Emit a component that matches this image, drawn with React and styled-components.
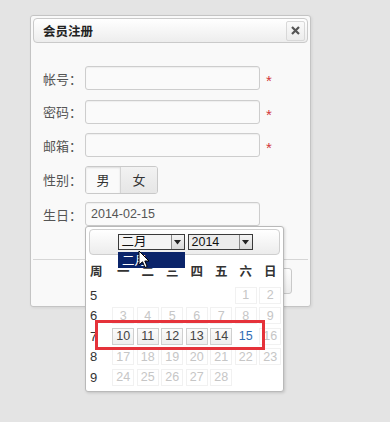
import React from "react";
import styled, { createGlobalStyle } from "styled-components";

const GlobalStyle = createGlobalStyle`
  html, body {
    margin: 0;
    padding: 0;
    background: #e4e4e4;
    font-family: "Liberation Sans", "Noto Sans CJK SC", sans-serif;
  }
`;

const Page = styled.div`
  width: 390px;
  height: 422px;
  padding: 15px 0 0 30px;
  box-sizing: border-box;
  overflow: hidden;
`;

const Dialog = styled.div`
  position: relative;
  width: 281px;
  box-sizing: border-box;
  border: 1px solid #c4c4c4;
  border-radius: 3px;
  background: #f9f9f9;
  padding: 2px 2px 0;
  box-shadow: 1px 1px 3px rgba(0, 0, 0, 0.08);
`;

const Header = styled.div`
  height: 25px;
  box-sizing: border-box;
  display: flex;
  align-items: center;
  justify-content: space-between;
  padding: 0 2px 0 9px;
  border: 1px solid #cacaca;
  border-radius: 4px;
  background: linear-gradient(#ffffff, #ededed);
`;

const Title = styled.span`
  font-family: "Noto Sans CJK SC", sans-serif;
  font-weight: 700;
  font-size: 12.5px;
  color: #222;
`;

const CloseButton = styled.div`
  width: 19px;
  height: 20px;
  box-sizing: border-box;
  border: 1px solid #d8d8d8;
  border-radius: 2px;
  background: linear-gradient(#fafafa, #ececec);
  display: flex;
  align-items: center;
  justify-content: center;
  color: #555;
`;

const Body = styled.div`
  display: flex;
  flex-direction: column;
  gap: 9.5px;
  padding: 23px 0 33px 10px;
`;

const Row = styled.div`
  display: flex;
  align-items: center;
  height: ${(p) => p.h || 24}px;
`;

const Label = styled.span`
  width: 42px;
  font-family: "Noto Sans CJK SC", sans-serif;
  font-size: 13px;
  color: #555;
`;

const Input = styled.div`
  width: 175px;
  height: 24px;
  box-sizing: border-box;
  border: 1px solid #cdcdcd;
  border-radius: 3px;
  background: #fafafa;
  box-shadow: inset 0 1px 1px rgba(0, 0, 0, 0.05);
  padding-left: 5px;
  display: flex;
  align-items: center;
  font-family: "Liberation Sans", sans-serif;
  font-size: 12.5px;
  color: #555;
`;

const Required = styled.span`
  margin-left: 6px;
  color: #d2363a;
  font-size: 15px;
  padding-top: 5px;
`;

const Toggle = styled.div`
  display: flex;
  height: 26px;
  border: 1px solid #c9c9c9;
  border-radius: 3px;
  overflow: hidden;
`;

const ToggleItem = styled.div`
  width: ${(p) => p.w}px;
  display: flex;
  align-items: center;
  justify-content: center;
  font-family: "Noto Sans CJK SC", sans-serif;
  font-size: 13px;
  color: #333;
  background: ${(p) => (p.active ? "#fafafa" : "linear-gradient(#f2f2f2, #e6e6e6)")};
  box-shadow: ${(p) => (p.active ? "inset 0 1px 2px rgba(0,0,0,0.12)" : "none")};
  & + & {
    border-left: 1px solid #d4d4d4;
  }
`;

const Footer = styled.div`
  border-top: 1px solid #d6d6d6;
  height: 47px;
  display: flex;
  justify-content: flex-end;
  align-items: flex-start;
  padding: 8px 16px 0 0;
  box-sizing: border-box;
`;

const FooterButton = styled.div`
  width: 36px;
  height: 26px;
  box-sizing: border-box;
  border: 1px solid #c9c9c9;
  border-radius: 3px;
  background: linear-gradient(#fdfdfd, #ececec);
`;

/* date picker popup */
const Calendar = styled.div`
  position: absolute;
  left: 54px;
  top: 210px;
  width: 199px;
  height: 166px;
  box-sizing: border-box;
  border: 1px solid #b9b9b9;
  border-radius: 3px;
  background: #fff;
  box-shadow: 1px 1px 3px rgba(0, 0, 0, 0.15);
  padding: 2px 3px 0;
`;

const CalHead = styled.div`
  height: 26px;
  box-sizing: border-box;
  border: 1px solid #cfcfcf;
  border-radius: 4px;
  background: linear-gradient(#ffffff, #ececec);
  display: flex;
  align-items: center;
  justify-content: center;
  gap: 3px;
  padding-left: 1px;
`;

const Select = styled.div`
  width: ${(p) => p.w}px;
  height: 16px;
  box-sizing: border-box;
  border: 1px solid #3a3a3a;
  background: ${(p) => p.bg};
  display: flex;
  align-items: stretch;
`;

const SelectText = styled.span`
  flex: 1;
  padding-left: 3px;
  font-family: "Liberation Sans", "Noto Sans CJK SC", sans-serif;
  font-size: 12.5px;
  line-height: 14px;
  color: #111;
`;

const SelectArrow = styled.span`
  width: 13px;
  box-sizing: border-box;
  border-left: 1px solid #8a8a8a;
  background: linear-gradient(#f4f4f4, #d9d9d9);
  display: flex;
  align-items: center;
  justify-content: center;
`;

const DropList = styled.div`
  position: absolute;
  left: 32px;
  top: 25px;
  width: 67px;
  height: 16px;
  background: #0a246a;
  color: #fff;
  font-family: "Noto Sans CJK SC", sans-serif;
  font-size: 12.5px;
  line-height: 16px;
  padding-left: 4px;
  box-sizing: border-box;
  z-index: 2;
`;

const Cursor = styled.svg`
  position: absolute;
  left: 52px;
  top: 23px;
  z-index: 3;
`;

const Grid = styled.div`
  display: grid;
  grid-template-columns: 22px repeat(7, 24.5px);
  grid-auto-rows: ${(p) => p.rh}px;
  margin-top: ${(p) => p.mt}px;
  align-items: center;
`;

const WeekDay = styled.span`
  font-family: "Noto Sans CJK SC", sans-serif;
  font-weight: 700;
  font-size: 12.5px;
  color: #333;
  text-align: ${(p) => (p.left ? "left" : "center")};
  padding-left: ${(p) => (p.left ? "1px" : "0")};
`;

const WeekNo = styled.span`
  font-family: "Liberation Sans", sans-serif;
  font-size: 13px;
  color: #333;
  padding-left: 1px;
`;

const Day = styled.span`
  justify-self: center;
  width: 22px;
  height: 17px;
  box-sizing: border-box;
  display: flex;
  align-items: center;
  justify-content: center;
  font-family: "Liberation Sans", sans-serif;
  font-size: 12.5px;
  color: ${(p) => (p.kind === "on" ? "#444" : p.kind === "today" ? "#2f6db5" : "#c6c6c6")};
  border: 1px solid ${(p) => (p.kind === "on" ? "#cfcfcf" : p.kind === "today" ? "transparent" : "#f1f1f1")};
  background: ${(p) => (p.kind === "on" ? "linear-gradient(#fbfbfb, #eeeeee)" : "#fff")};
`;

const Highlight = styled.div`
  position: absolute;
  left: 9px;
  top: 93px;
  width: 170px;
  height: 30px;
  box-sizing: border-box;
  border: 3px solid #e5323a;
  pointer-events: none;
`;

const Arrow = () => (
  <svg width="7" height="5" viewBox="0 0 7 5">
    <path d="M0 0 H7 L3.5 4.5 Z" fill="#222" />
  </svg>
);

const weeks = [
  [5, [null, null, null, null, null, 1, 2]],
  [6, [3, 4, 5, 6, 7, 8, 9]],
  [7, [10, 11, 12, 13, 14, 15, 16]],
  [8, [17, 18, 19, 20, 21, 22, 23]],
  [9, [24, 25, 26, 27, 28, null, null]],
];

const kindOf = (d) => {
  if (d >= 10 && d <= 14) return "on";
  if (d === 15) return "today";
  return "off";
};

export default function App() {
  return (
    <>
      <GlobalStyle />
      <Page>
        <Dialog>
          <Header>
            <Title>会员注册</Title>
            <CloseButton>
              <svg width="9" height="9" viewBox="0 0 9 9">
                <path d="M1 1 L8 8 M8 1 L1 8" stroke="#555" strokeWidth="2.2" />
              </svg>
            </CloseButton>
          </Header>
          <Body>
            <Row>
              <Label>帐号：</Label>
              <Input />
              <Required>*</Required>
            </Row>
            <Row>
              <Label>密码：</Label>
              <Input />
              <Required>*</Required>
            </Row>
            <Row>
              <Label>邮箱：</Label>
              <Input />
              <Required>*</Required>
            </Row>
            <Row h={26}>
              <Label>性别：</Label>
              <Toggle>
                <ToggleItem w={34} active>男</ToggleItem>
                <ToggleItem w={36}>女</ToggleItem>
              </Toggle>
            </Row>
            <Row>
              <Label>生日：</Label>
              <Input>2014-02-15</Input>
            </Row>
          </Body>
          <Footer>
            <FooterButton />
          </Footer>

          <Calendar>
            <CalHead>
              <Select w={67} bg="#f4f4f4">
                <SelectText>二月</SelectText>
                <SelectArrow><Arrow /></SelectArrow>
              </Select>
              <Select w={65} bg="#ececec">
                <SelectText>2014</SelectText>
                <SelectArrow><Arrow /></SelectArrow>
              </Select>
            </CalHead>
            <DropList>二月</DropList>
            <Cursor width="12" height="19" viewBox="0 0 12 19">
              <path d="M1 1 L1 15 L4.5 11.8 L7 17.5 L9.2 16.5 L6.8 11 L11 11 Z" fill="#fff" stroke="#000" strokeWidth="1" strokeLinejoin="round" />
            </Cursor>
            <Grid rh={24} mt={3}>
              <WeekDay left>周</WeekDay>
              {["一", "二", "三", "四", "五", "六", "日"].map((w) => (
                <WeekDay key={w}>{w}</WeekDay>
              ))}
            </Grid>
            <Grid rh={20.5} mt={3}>
              {weeks.map(([no, days]) => (
                <React.Fragment key={no}>
                  <WeekNo>{no}</WeekNo>
                  {days.map((d, i) =>
                    d === null ? <span key={i} /> : <Day key={i} kind={kindOf(d)}>{d}</Day>
                  )}
                </React.Fragment>
              ))}
            </Grid>
            <Highlight />
          </Calendar>
        </Dialog>
      </Page>
    </>
  );
}
